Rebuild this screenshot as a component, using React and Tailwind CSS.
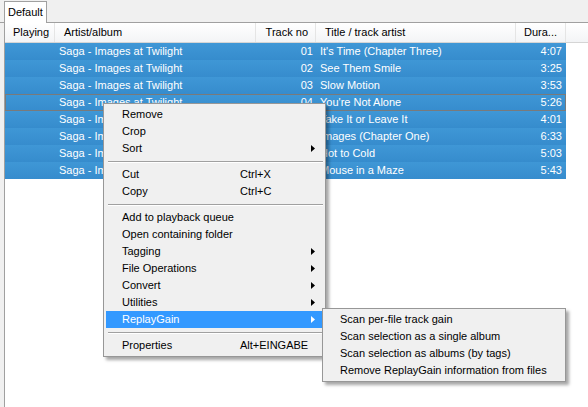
const rows = [
  ['Saga - Images at Twilight', '01', "It's Time (Chapter Three)", '4:07'],
  ['Saga - Images at Twilight', '02', 'See Them Smile', '3:25'],
  ['Saga - Images at Twilight', '03', 'Slow Motion', '3:53'],
  ['Saga - Images at Twilight', '04', "You're Not Alone", '5:26'],
  ['Saga - Images at Twilight', '05', 'Take It or Leave It', '4:01'],
  ['Saga - Images at Twilight', '06', 'Images (Chapter One)', '6:33'],
  ['Saga - Images at Twilight', '07', 'Hot to Cold', '5:03'],
  ['Saga - Images at Twilight', '08', 'Mouse in a Maze', '5:43'],
]

const menu = [
  { label: 'Remove' },
  { label: 'Crop' },
  { label: 'Sort', sub: true },
  { sep: true },
  { label: 'Cut', key: 'Ctrl+X' },
  { label: 'Copy', key: 'Ctrl+C' },
  { sep: true },
  { label: 'Add to playback queue' },
  { label: 'Open containing folder' },
  { label: 'Tagging', sub: true },
  { label: 'File Operations', sub: true },
  { label: 'Convert', sub: true },
  { label: 'Utilities', sub: true },
  { label: 'ReplayGain', sub: true, active: true },
  { sep: true },
  { label: 'Properties', key: 'Alt+EINGABE' },
]

const submenu = [
  'Scan per-file track gain',
  'Scan selection as a single album',
  'Scan selection as albums (by tags)',
  'Remove ReplayGain information from files',
]

function Arrow({ white }) {
  return (
    <svg width="4" height="7" viewBox="0 0 4 7" className="absolute right-[8px] top-[5px]">
      <path d="M0 0 L4 3.5 L0 7 Z" fill={white ? '#ffffff' : '#000000'} />
    </svg>
  )
}

export default function App() {
  return (
    <div
      className="relative w-[588px] h-[407px] overflow-hidden bg-[#f0f0f0] text-[11px] text-black"
      style={{ fontFamily: 'Tahoma, "Liberation Sans", Arial, sans-serif' }}
    >
      {/* tab strip */}
      <div className="h-[23px] flex items-end pl-[4px] border-b border-[#a0a0a0]">
        <div className="h-[22px] px-[3px] bg-white border border-b-0 border-[#a0a0a0] leading-[20px] -mb-px relative z-10">
          Default
        </div>
      </div>

      {/* playlist */}
      <div className="ml-[4px] h-[384px] bg-white border-l border-[#a0a0a0] flex flex-col">
        <div className="h-[20px] flex bg-gradient-to-b from-white to-[#f3f4f6] border-b border-[#d5d5d5] leading-[19px] text-black">
          <div className="w-[50px] pl-[8px] border-r border-[#e5e5e5]">Playing</div>
          <div className="w-[201px] pl-[9px] border-r border-[#e5e5e5]">Artist/album</div>
          <div className="w-[60px] pr-[7px] text-right border-r border-[#e5e5e5]">Track no</div>
          <div className="w-[200px] pl-[9px] border-r border-[#e5e5e5]">Title / track artist</div>
          <div className="w-[50px] pl-[8px] border-r border-[#e5e5e5]">Dura...</div>
          <div className="flex-1" />
        </div>
        <div className="flex flex-col w-[561px]">
          {rows.map((r, i) => (
            <div
              key={i}
              className={`h-[17px] flex leading-[17px] text-white bg-gradient-to-b from-[#3f97d6] to-[#368ccd] ${i === 3 ? 'outline outline-1 -outline-offset-1 outline-[#7a7a7a]' : ''}`}
            >
              <div className="w-[50px]" />
              <div className="w-[201px] pl-[4px]">{r[0]}</div>
              <div className="w-[57px] text-right">{r[1]}</div>
              <div className="w-[203px] pl-[7px]">{r[2]}</div>
              <div className="w-[46px] text-right">{r[3]}</div>
            </div>
          ))}
        </div>
      </div>

      {/* context menu */}
      <div className="absolute left-[103px] top-[103px] w-[223px] bg-[#f0f0f0] border border-[#979797] p-[2px] shadow-[3px_3px_3px_rgba(0,0,0,0.35)]">
        {menu.map((m, i) =>
          m.sep ? (
            <div key={i} className="h-[9px] flex items-center ml-[2px]">
              <div className="w-full h-[2px] border-t border-[#a0a0a0] border-b border-b-white" />
            </div>
          ) : (
            <div
              key={i}
              className={`relative h-[17px] leading-[17px] pl-[16px] flex ${m.active ? 'bg-[#3399ff] text-white' : ''}`}
            >
              <span className="w-[118px]">{m.label}</span>
              {m.key && <span>{m.key}</span>}
              {m.sub && <Arrow white={m.active} />}
            </div>
          )
        )}
      </div>

      {/* submenu */}
      <div className="absolute left-[322px] top-[308px] w-[244px] bg-[#f0f0f0] border border-[#979797] py-[2px] shadow-[3px_3px_3px_rgba(0,0,0,0.35)]">
        {submenu.map((s) => (
          <div key={s} className="h-[17px] leading-[17px] pl-[17px]">
            {s}
          </div>
        ))}
      </div>
    </div>
  )
}
